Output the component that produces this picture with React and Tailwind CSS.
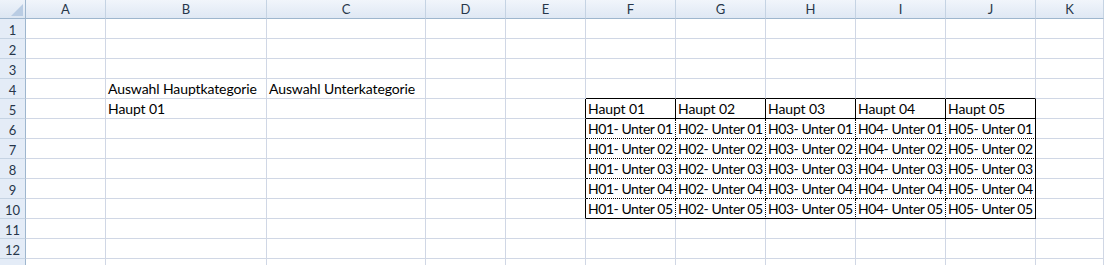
import React from "react";

const COLS = [
  { k: "A", w: "w-[80px]" },
  { k: "B", w: "w-[161px]" },
  { k: "C", w: "w-[159px]" },
  { k: "D", w: "w-[80px]" },
  { k: "E", w: "w-[80px]" },
  { k: "F", w: "w-[90px]" },
  { k: "G", w: "w-[90px]" },
  { k: "H", w: "w-[90px]" },
  { k: "I", w: "w-[90px]" },
  { k: "J", w: "w-[90px]" },
  { k: "K", w: "flex-1" },
];

const TABLE_COLS = ["F", "G", "H", "I", "J"];

function content(col, row) {
  if (row === 4 && col === "B") return "Auswahl Hauptkategorie";
  if (row === 4 && col === "C") return "Auswahl Unterkategorie";
  if (row === 5 && col === "B") return "Haupt 01";
  const ti = TABLE_COLS.indexOf(col);
  if (ti >= 0) {
    if (row === 5) return `Haupt 0${ti + 1}`;
    if (row >= 6 && row <= 10) return `H0${ti + 1}- Unter 0${row - 5}`;
  }
  return "";
}

function rightClass(col, row) {
  const ti = TABLE_COLS.indexOf(col);
  if (row >= 5 && row <= 10) {
    if (col === "E" || col === "J") return "border-r border-r-black";
    if (ti >= 0) {
      if (row === 5) return "border-r border-r-black";
      return "border-r border-r-black [border-right-style:dotted]";
    }
  }
  return "border-r border-r-[#d0d7e5]";
}

function bottomClass(col, row) {
  const ti = TABLE_COLS.indexOf(col);
  if (ti >= 0) {
    if (row === 4 || row === 5 || row === 10) return "border-b border-b-black";
    if (row >= 6 && row <= 9) return "border-b border-b-black [border-bottom-style:dotted]";
  }
  return "border-b border-b-[#d0d7e5]";
}

function trackClass(col, row) {
  if (TABLE_COLS.includes(col) && row >= 6 && row <= 10) return "tracking-[-0.45px]";
  return "tracking-[-0.1px]";
}

export default function App() {
  const rows = Array.from({ length: 13 }, (_, i) => i + 1);
  return (
    <div
      className="w-[1104px] h-[265px] overflow-hidden bg-white text-black"
      style={{ fontFamily: "Lato, 'Open Sans', sans-serif" }}
    >
      {/* Column header */}
      <div className="flex h-[19px]">
        <div className="relative w-[26px] h-[19px] shrink-0 bg-gradient-to-b from-[#eef3fa] to-[#dce6f2] border-r border-r-[#9eb6ce] border-b border-b-[#9eb6ce]">
          <svg className="absolute right-[2px] bottom-[2px]" width="12" height="12" viewBox="0 0 12 12">
            <polygon points="12,0 12,12 0,12" fill="#b9cce3" />
          </svg>
        </div>
        {COLS.map((c) => (
          <div
            key={c.k}
            className={`${c.w} shrink-0 h-[19px] flex items-center justify-center bg-gradient-to-b from-[#f1f5fb] to-[#dfe8f4] border-r border-r-[#c5d3e3] border-b border-b-[#9eb6ce] text-[13px] leading-none text-[#27364a]`}
          >
            {c.k}
          </div>
        ))}
      </div>
      {rows.map((r) => (
        <div key={r} className="flex h-[20px]">
          <div className="w-[26px] shrink-0 h-[20px] flex items-center justify-center pt-[3px] bg-[#e4ecf7] border-r border-r-[#9eb6ce] border-b border-b-[#c5d3e3] text-[13px] leading-none text-[#27364a]">
            {r <= 12 ? r : ""}
          </div>
          {COLS.map((c) => (
            <div
              key={c.k}
              className={`${c.w} shrink-0 h-[20px] flex items-end pl-[2px] pb-[1px] whitespace-nowrap overflow-visible text-[14px] leading-[17px] ${trackClass(c.k, r)} ${rightClass(c.k, r)} ${bottomClass(c.k, r)}`}
            >
              {content(c.k, r)}
            </div>
          ))}
        </div>
      ))}
    </div>
  );
}
